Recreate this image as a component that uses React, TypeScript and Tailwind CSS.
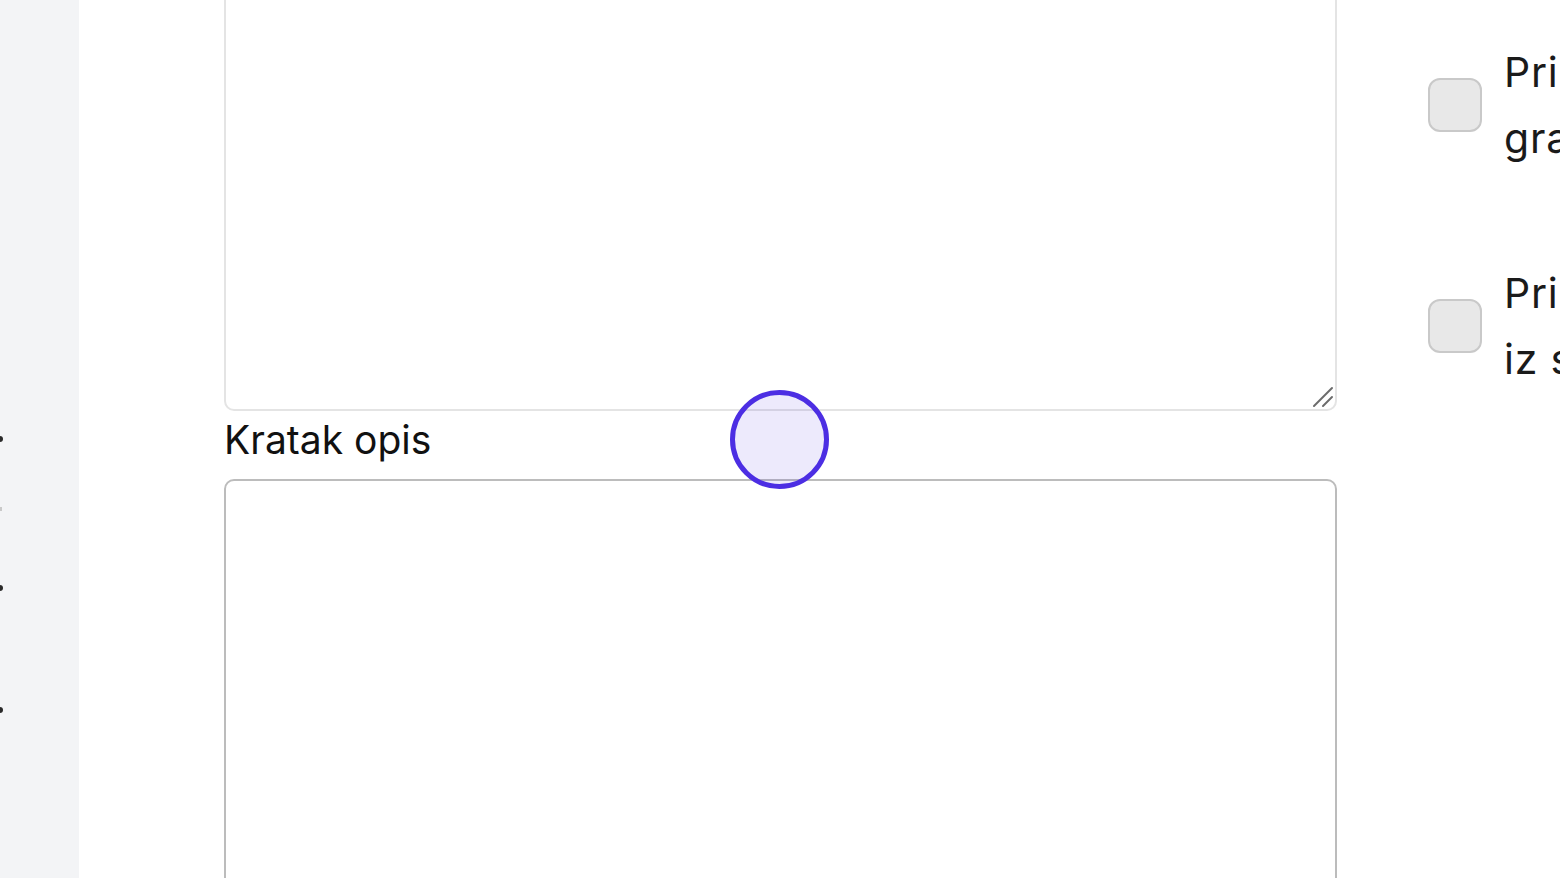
const Dot = ({ faint }: { faint?: boolean }) => (
    <div className={faint ? "w-[2px] h-[4px] bg-[#c9c9c9]" : "w-[3px] h-[6px] rounded-r-full bg-[#2a2a2a]"} />
);

const CheckRow = ({ first, second }: { first: string; second: string }) => (
    <div className="flex items-center gap-[22px]">
        <div className="w-[54px] h-[54px] shrink-0 rounded-[12px] border-2 border-[#c9c9c9] bg-[#e8e8e8]" />
        <div className="w-[420px] shrink-0 text-[41px] leading-[66px] tracking-[0.8px] text-[#1a1a1a] whitespace-nowrap">
            <div>{first}</div>
            <div>{second}</div>
        </div>
    </div>
);

const App = () => {
    return (
        <div className="flex h-[878px] w-[1560px] overflow-hidden bg-white font-['Inter','Liberation_Sans',sans-serif]">
            {/* sidebar, only the edge is visible */}
            <aside className="w-[79px] shrink-0 bg-[#f3f4f6] flex flex-col pt-[436px]">
                <Dot />
                <div className="h-[65px]" />
                <Dot faint />
                <div className="h-[74px]" />
                <Dot />
                <div className="h-[116px]" />
                <Dot />
            </aside>

            <main className="relative flex-1 overflow-hidden flex gap-[91px] pl-[145px]">
                <section className="w-[1113px] shrink-0 flex flex-col">
                    <div className="relative -mt-[120px] h-[531px] shrink-0">
                        <textarea className="h-full w-full resize-none rounded-[10px] border-2 border-[#e4e4e4] bg-white outline-none" />
                        <svg className="absolute right-0 bottom-0 w-[28px] h-[28px]" viewBox="0 0 28 28" fill="none" stroke="#6b6b6b" strokeWidth={2} strokeLinecap="round">
                            <path d="M5 23 L23 5" />
                            <path d="M14 23 L23 14" />
                        </svg>
                    </div>
                    <label className="mt-[6px] shrink-0 text-[39px] leading-[46px] text-[#111]">Kratak opis</label>
                    <textarea className="mt-[16px] h-[520px] w-full shrink-0 resize-none rounded-[10px] border-2 border-[#bcbcbc] bg-white outline-none" />
                </section>

                <section className="flex flex-col gap-[89px] pt-[39px]">
                    <CheckRow first="Prikazati na" second="grafikonu" />
                    <CheckRow first="Prikazati podatke" second="iz sustava" />
                </section>

                {/* click indicator */}
                <div className="absolute left-[651px] top-[390px] w-[99px] h-[99px] rounded-full border-[5px] border-[#4c2ee3] bg-[#4c2ee3]/10" />
            </main>
        </div>
    );
};

export default App;
